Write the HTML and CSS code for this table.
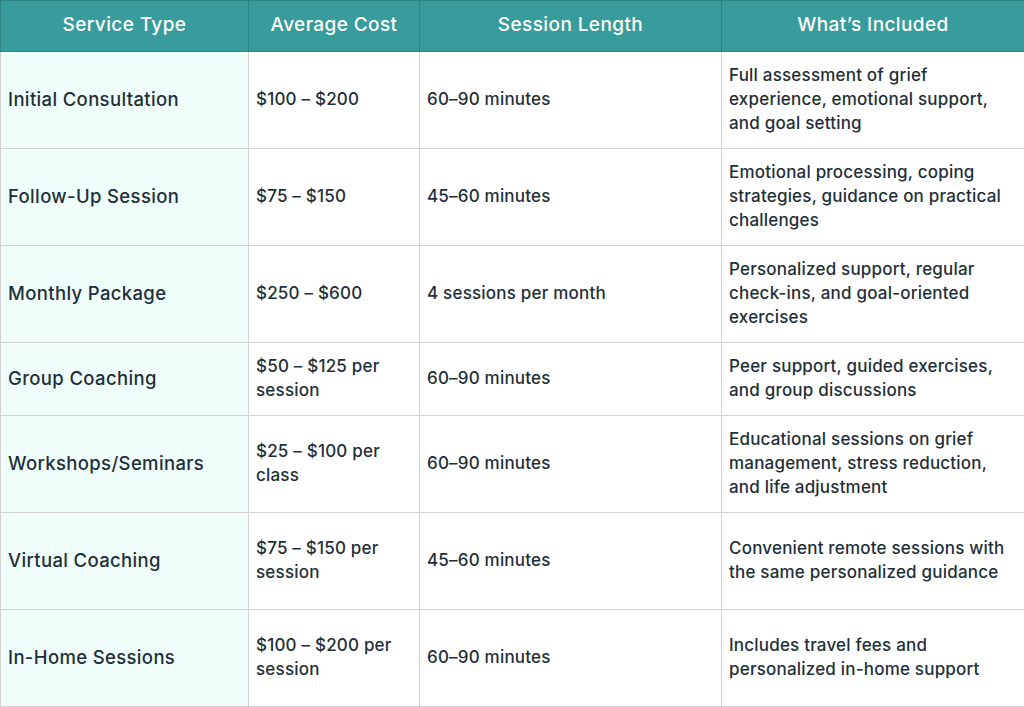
FILE: index.html
```html
<!DOCTYPE html>
<html lang="en">
<head>
<meta charset="utf-8">
<title>Grief Coaching Costs</title>
<link rel="stylesheet" href="styles.css">
</head>
<body>
<table class="pricing">
  <colgroup>
    <col class="c1"><col class="c2"><col class="c3"><col class="c4">
  </colgroup>
  <thead>
    <tr class="head">
      <th>Service Type</th>
      <th>Average Cost</th>
      <th>Session Length</th>
      <th>What’s Included</th>
    </tr>
  </thead>
  <tbody>
    <tr class="r3">
      <td class="svc">Initial Consultation</td>
      <td>$100 – $200</td>
      <td>60–90 minutes</td>
      <td class="inc">Full assessment of grief experience, emotional support, and goal setting</td>
    </tr>
    <tr class="r3">
      <td class="svc">Follow-Up Session</td>
      <td>$75 – $150</td>
      <td>45–60 minutes</td>
      <td class="inc">Emotional processing, coping strategies, guidance on practical challenges</td>
    </tr>
    <tr class="r3">
      <td class="svc">Monthly Package</td>
      <td>$250 – $600</td>
      <td>4 sessions per month</td>
      <td class="inc">Personalized support, regular check-ins, and goal-oriented exercises</td>
    </tr>
    <tr class="r2">
      <td class="svc">Group Coaching</td>
      <td>$50 – $125 per session</td>
      <td>60–90 minutes</td>
      <td class="inc">Peer support, guided exercises, and group discussions</td>
    </tr>
    <tr class="rt">
      <td class="svc">Workshops/Seminars</td>
      <td>$25 – $100 per class</td>
      <td>60–90 minutes</td>
      <td class="inc">Educational sessions on grief management, stress reduction, and life adjustment</td>
    </tr>
    <tr class="rt">
      <td class="svc">Virtual Coaching</td>
      <td>$75 – $150 per session</td>
      <td>45–60 minutes</td>
      <td class="inc">Convenient remote sessions with the same personalized guidance</td>
    </tr>
    <tr class="rt">
      <td class="svc">In-Home Sessions</td>
      <td>$100 – $200 per session</td>
      <td>60–90 minutes</td>
      <td class="inc">Includes travel fees and personalized in-home support</td>
    </tr>
  </tbody>
</table>
</body>
</html>
```
FILE: styles.css
```css
html, body {
  margin: 0;
  padding: 0;
  background: #ffffff;
}
body {
  font-family: "Inter", "Noto Sans", sans-serif;
  color: #1f2f38;
}
.pricing {
  width: 1024px;
  border-collapse: collapse;
  table-layout: fixed;
  font-size: 17px;
  letter-spacing: 0.2px;
  font-weight: 500;
  line-height: 24px;
}
.c1 { width: 248px; }
.c2 { width: 171px; }
.c3 { width: 302px; }
.c4 { width: 303px; }
.pricing th,
.pricing td {
  border: 1px solid #d2d2d2;
  padding: 11px 7px 13px;
  vertical-align: middle;
  text-align: left;
}
.pricing th {
  background: #379c9b;
  color: #ffffff;
  font-weight: 500;
  font-size: 19px;
  letter-spacing: 0.4px;
  text-align: center;
  height: 27px;
  padding-top: 10px;
  padding-bottom: 13px;
  border-color: #2f8584;
}
.pricing td.svc {
  background: #effefb;
  font-size: 18.5px;
  letter-spacing: 0.35px;
}
.pricing td.inc {
  padding-right: 13px;
}
.r3 td { height: 70px; }
.r2 td { height: 47px; }
.rt td { height: 72px; }
```
